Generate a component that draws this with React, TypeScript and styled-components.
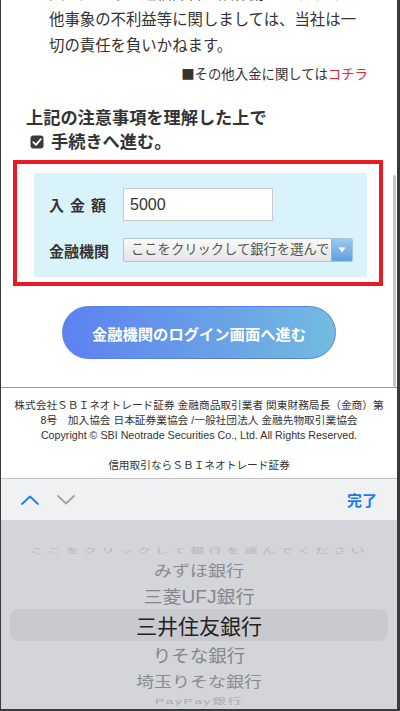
import { createGlobalStyle, styled } from "styled-components";

const font = `"Liberation Sans", "Noto Sans CJK JP", sans-serif`;
const jpFont = `"Noto Sans CJK JP", "Liberation Sans", sans-serif`;

const GlobalStyle = createGlobalStyle`
  html, body {
    margin: 0;
    padding: 0;
    background: #fff;
  }
  body {
    font-family: ${font};
    color: #333;
  }
`;

const Frame = styled.div`
  width: 400px;
  height: 711px;
  box-sizing: border-box;
  border-left: 1px solid #3a3a3a;
  border-right: 3px solid #3a3a3a;
  border-bottom: 2px solid #3a3a3a;
  display: flex;
  flex-direction: column;
  overflow: hidden;
  background: #fff;
`;

const WebView = styled.div`
  position: relative;
  height: 478px;
  flex: none;
  overflow: hidden;
`;

const Scroller = styled.div`
  margin-top: -19px;
`;

const ScrollBar = styled.div`
  position: absolute;
  left: 392px;
  top: 175px;
  width: 3px;
  height: 212px;
  border-radius: 2px;
  background: #c6c6c6;
`;

const Notice = styled.ul`
  margin: 0;
  padding: 0 0 0 48px;
  font-size: 15.4px;
  line-height: 26px;
  color: #333;

  li {
    position: relative;
    list-style: none;
  }

  li::before {
    content: "";
    position: absolute;
    left: -16px;
    top: 11px;
    width: 5px;
    height: 5px;
    border-radius: 50%;
    background: #222;
  }
`;

const OtherLink = styled.p`
  margin: 4px 29px 0 0;
  text-align: right;
  font-family: ${jpFont};
  font-size: 13.4px;
  line-height: 20px;
  color: #333;

  a {
    color: #e8262d;
    text-decoration: none;
  }
`;

const Agree = styled.div`
  margin: 23px 0 0 25px;
  font-size: 17.2px;
  font-weight: bold;
  line-height: 24px;
  color: #333;
`;

const CheckLine = styled.div`
  display: flex;
  align-items: center;
  gap: 7px;
  margin-left: 4px;
`;

const Highlight = styled.div`
  margin: 6px 14px 0 12px;
  border: 4px solid #e81a24;
  padding: 9px 12px 5px 17px;
`;

const Panel = styled.div`
  background: #d9f3fa;
  padding: 15px 0 15px 15px;
  display: flex;
  flex-direction: column;
  gap: 17px;
`;

const FieldRow = styled.div`
  display: flex;
  align-items: center;
`;

const Label = styled.span<{ $spread?: boolean }>`
  width: 74px;
  font-size: 15px;
  font-weight: bold;
  color: #333;
  letter-spacing: ${(p) => (p.$spread ? "6px" : "0")};
`;

const AmountInput = styled.div`
  box-sizing: border-box;
  width: 150px;
  height: 33px;
  border: 1px solid #c9c9c9;
  background: #fff;
  padding: 0 6px;
  display: flex;
  align-items: center;
  font-size: 16px;
  color: #333;
`;

const Select = styled.div`
  box-sizing: border-box;
  width: 230px;
  height: 24px;
  border: 1px solid #b4c2cf;
  border-radius: 2px;
  background: linear-gradient(#fafafa, #e4e4e4);
  display: flex;
  align-items: stretch;
  overflow: hidden;
`;

const SelectText = styled.span`
  flex: 1;
  padding-left: 7px;
  font-size: 13.3px;
  line-height: 22px;
  color: #555;
  white-space: nowrap;
  overflow: hidden;
`;

const SelectArrow = styled.span`
  width: 20px;
  display: flex;
  align-items: center;
  justify-content: center;
  background: linear-gradient(#9ccaf0, #5f9fdc);
  border-left: 1px solid #8fb4d8;
`;

const LoginButton = styled.button`
  display: block;
  margin: 20px auto 0;
  width: 274px;
  height: 53px;
  border-radius: 27px;
  border: 1px solid #5b7fe8;
  background: linear-gradient(90deg, #5d82f0 0%, #6aa2e6 60%, #72bce0 100%);
  color: #fff;
  font-family: ${font};
  font-size: 15.3px;
  font-weight: bold;
  cursor: pointer;
`;

const Footer = styled.footer`
  margin-top: 28px;
  border-top: 1px solid #9a9a9a;
  padding: 10px 12px 0;
  text-align: center;
  font-size: 10.7px;
  line-height: 15px;
  color: #333;

  p {
    margin: 0;
  }

  p + p {
    margin-top: 15px;
  }
`;

const Keyboard = styled.div`
  flex: 1;
  display: flex;
  flex-direction: column;
  background: #d4d5d9;
`;

const Toolbar = styled.div`
  height: 42px;
  box-sizing: border-box;
  border-top: 1px solid #c3c3c3;
  background: #f0f1f3;
  display: flex;
  align-items: center;
  padding: 0 20px 0 20px;
`;

const NavButtons = styled.div`
  display: flex;
  align-items: center;
  gap: 18px;
  flex: 1;
`;

const Done = styled.span`
  font-size: 15px;
  font-weight: bold;
  color: #1a7cf3;
`;

const Wheel = styled.div`
  padding-top: 20px;
  display: flex;
  flex-direction: column;
`;

const WheelItem = styled.div<{
  $h: number;
  $size: number;
  $scale: number;
  $color: string;
  $spacing?: number;
  $selected?: boolean;
}>`
  height: ${(p) => p.$h}px;
  flex: none;
  display: flex;
  align-items: center;
  justify-content: center;
  margin: 0 ${(p) => (p.$selected ? 9 : 0)}px;
  border-radius: ${(p) => (p.$selected ? 8 : 0)}px;
  background: ${(p) => (p.$selected ? "#c9cacf" : "transparent")};
  font-size: ${(p) => p.$size}px;
  letter-spacing: ${(p) => p.$spacing ?? 0}px;
  color: ${(p) => p.$color};
  white-space: nowrap;

  span {
    display: inline-block;
    transform: scaleY(${(p) => p.$scale});
  }
`;

function CheckIcon() {
  return (
    <svg width="14" height="14" viewBox="0 0 14 14">
      <rect x="0.5" y="0.5" width="13" height="13" rx="3" fill="#3a3a3a" />
      <path d="M3.3 7.2 L6 9.8 L10.8 4.2" stroke="#fff" strokeWidth="1.8" fill="none" strokeLinecap="round" strokeLinejoin="round" />
    </svg>
  );
}

function Chevron({ up, color }: { up?: boolean; color: string }) {
  return (
    <svg width="18" height="10" viewBox="0 0 18 10">
      <path
        d={up ? "M1 9 L9 1.5 L17 9" : "M1 1 L9 8.5 L17 1"}
        stroke={color}
        strokeWidth="1.8"
        fill="none"
        strokeLinecap="round"
        strokeLinejoin="round"
      />
    </svg>
  );
}

const banks = [
  { name: "ここをクリックして銀行を選んでください", h: 19, size: 14, scale: 0.45, color: "#b4b5b9", spacing: 3.9 },
  { name: "みずほ銀行", h: 22, size: 18, scale: 0.8, color: "#8a8b8f" },
  { name: "三菱UFJ銀行", h: 28, size: 19, scale: 0.92, color: "#85868a" },
  { name: "三井住友銀行", h: 32, size: 21, scale: 1, color: "#222", selected: true },
  { name: "りそな銀行", h: 28, size: 18.5, scale: 0.92, color: "#85868a" },
  { name: "埼玉りそな銀行", h: 23, size: 18, scale: 0.8, color: "#8a8b8f" },
  { name: "PayPay銀行", h: 18, size: 14, scale: 0.55, color: "#a9aaae", spacing: 1.5 },
  { name: "ゆうちょ銀行", h: 14, size: 13, scale: 0.3, color: "#b9babe", spacing: 2 },
];

export default function App() {
  return (
    <>
      <GlobalStyle />
      <Frame>
        <WebView>
          <Scroller>
            <Notice>
              <li>
                入金処理中の通信障害、誤作動、およびその
                <br />
                他事象の不利益等に関しましては、当社は一
                <br />
                切の責任を負いかねます。
              </li>
            </Notice>
            <OtherLink>
              ■その他入金に関しては<a href="#">コチラ</a>
            </OtherLink>
            <Agree>
              上記の注意事項を理解した上で
              <CheckLine>
                <CheckIcon />
                手続きへ進む。
              </CheckLine>
            </Agree>
            <Highlight>
              <Panel>
                <FieldRow>
                  <Label $spread>入金額</Label>
                  <AmountInput>5000</AmountInput>
                </FieldRow>
                <FieldRow>
                  <Label>金融機関</Label>
                  <Select>
                    <SelectText>ここをクリックして銀行を選んでください</SelectText>
                    <SelectArrow>
                      <svg width="8" height="6" viewBox="0 0 8 6">
                        <path d="M0.5 0.5 L7.5 0.5 L4 5.5 Z" fill="#fff" />
                      </svg>
                    </SelectArrow>
                  </Select>
                </FieldRow>
              </Panel>
            </Highlight>
            <LoginButton>金融機関のログイン画面へ進む</LoginButton>
            <Footer>
              <p>
                株式会社ＳＢＩネオトレード証券 金融商品取引業者 関東財務局長（金商）第
                <br />
                8号　加入協会 日本証券業協会 /一般社団法人 金融先物取引業協会
                <br />
                Copyright © SBI Neotrade Securities Co., Ltd. All Rights Reserved.
              </p>
              <p>信用取引ならＳＢＩネオトレード証券</p>
            </Footer>
          </Scroller>
          <ScrollBar />
        </WebView>
        <Keyboard>
          <Toolbar>
            <NavButtons>
              <Chevron up color="#1a7af8" />
              <Chevron color="#a3a3a6" />
            </NavButtons>
            <Done>完了</Done>
          </Toolbar>
          <Wheel>
            {banks.map((b) => (
              <WheelItem
                key={b.name}
                $h={b.h}
                $size={b.size}
                $scale={b.scale}
                $color={b.color}
                $spacing={b.spacing}
                $selected={b.selected}
              >
                <span>{b.name}</span>
              </WheelItem>
            ))}
          </Wheel>
        </Keyboard>
      </Frame>
    </>
  );
}
